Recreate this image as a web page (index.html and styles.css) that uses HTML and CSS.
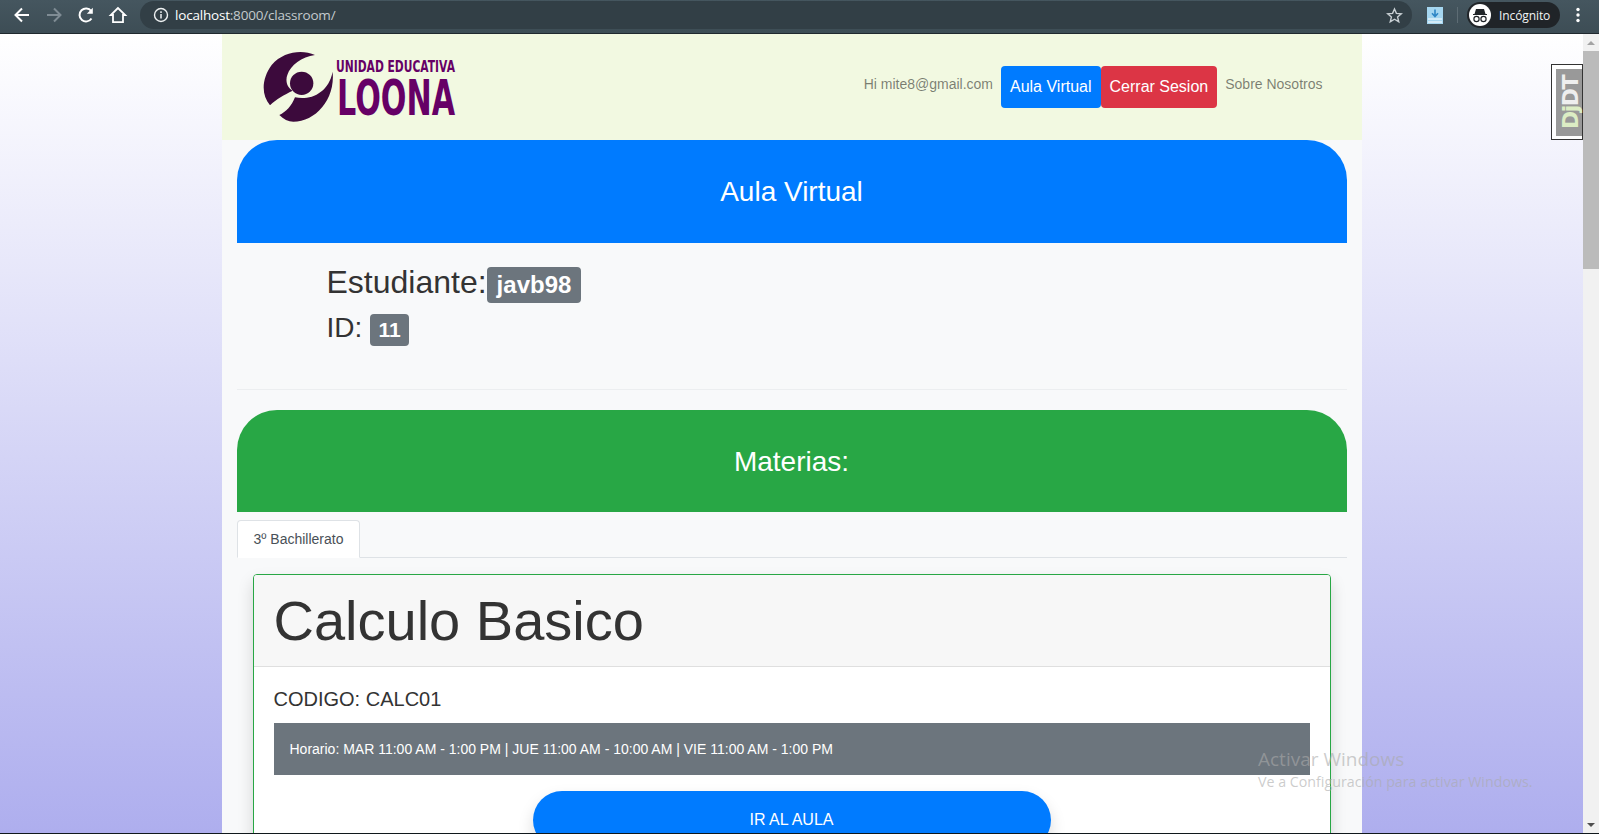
FILE: index.html
```html
<!DOCTYPE html>
<html lang="es">
<head>
<meta charset="utf-8">
<title>Aula Virtual</title>
<link rel="stylesheet" href="styles.css">
</head>
<body>
<header class="toolbar">
  <svg class="tool-icon" viewBox="0 0 20 20"><path d="M17 10H4M10 3.5 3.5 10l6.5 6.5" fill="none" stroke="#fff" stroke-width="2"/></svg>
  <svg class="tool-icon" viewBox="0 0 20 20"><path d="M3 10h13M10 3.5l6.5 6.500L10 16.500" fill="none" stroke="#7f8c94" stroke-width="2"/></svg>
  <svg class="tool-icon" viewBox="0 0 20 20"><path d="M15.500 13.500a6.500 6.500 0 1 1-.300-7.500" fill="none" stroke="#fff" stroke-width="2"/><path d="M16.800 2.800v6h-6z" fill="#fff"/></svg>
  <svg class="tool-icon" viewBox="0 0 20 20"><path d="M10 3 2.800 10H5v7.200h10V10h2.200z" fill="none" stroke="#fff" stroke-width="1.800"/></svg>
  <div class="address">
    <svg class="info-icon" viewBox="0 0 16 16"><circle cx="8" cy="8" r="6.500" fill="none" stroke="#eef1f2" stroke-width="1.400"/><path d="M8 7v4.500M8 4.300v1.600" stroke="#eef1f2" stroke-width="1.500"/></svg>
    <span class="url"><b class="host">localhost</b>:8000/classroom/</span>
    <svg class="star-icon" viewBox="0 0 16 16"><path d="M8 1.800 9.800 6l4.600.400-3.500 3 1.100 4.500L8 11.500 4 13.900l1.100-4.500-3.500-3L6.200 6z" fill="none" stroke="#c9d0d4" stroke-width="1.300"/></svg>
  </div>
  <svg class="save-icon" viewBox="0 0 16 17"><rect width="16" height="17" fill="#a5d6f0"/><path d="M8 2.500v6M5 6.300l3 3.200 3-3.200" fill="none" stroke="#2f86c5" stroke-width="1.600"/><path d="M1 12h14M1 15h14" stroke="#fff" stroke-width="1"/></svg>
  <span class="toolbar-sep"></span>
  <div class="profile">
    <span class="profile-face">
      <svg viewBox="0 0 22 22"><path d="M4 10h14v1H4zM7 5h8l1.500 5h-11z" fill="#202428"/><circle cx="7.500" cy="15" r="2.600" fill="none" stroke="#202428" stroke-width="1.200"/><circle cx="14.500" cy="15" r="2.600" fill="none" stroke="#202428" stroke-width="1.200"/></svg>
    </span>
    <span class="profile-name">Incógnito</span>
  </div>
  <svg class="menu-icon" viewBox="0 0 4 16"><circle cx="2" cy="2.500" r="1.700" fill="#fff"/><circle cx="2" cy="8" r="1.700" fill="#fff"/><circle cx="2" cy="13.500" r="1.700" fill="#fff"/></svg>
</header>

<div class="window">
  <main class="page">
    <div class="container">
      <nav class="navbar">
        <svg class="logo" viewBox="0 0 320 80" role="img" aria-label="Unidad Educativa Loona">
          <g transform="translate(-263 -47) scale(.33333)" fill="#3c0a3c">
            <path d="M945 165C905 148 850 155 815 195 785 235 783 285 810 316 830 296 852 285 878 272 860 262 856 240 862 225 872 195 905 170 945 165Z"/>
            <circle cx="905" cy="250" r="35"/>
            <path d="M998 215C1006 300 945 365 880 365 865 365 850 358 838 345 858 336 875 318 885 292 930 302 985 280 998 215Z"/>
          </g>
          <text class="logo-top" x="73" y="25" textLength="119" lengthAdjust="spacingAndGlyphs">UNIDAD EDUCATIVA</text>
          <text class="logo-main" x="74" y="68" textLength="118" lengthAdjust="spacingAndGlyphs">LOONA</text>
        </svg>
        <div class="nav-items">
          <span class="nav-text nav-user">Hi mite8@gmail.com</span>
          <a class="nav-btn btn-blue">Aula Virtual</a>
          <a class="nav-btn btn-red">Cerrar Sesion</a>
          <span class="nav-text nav-about">Sobre Nosotros</span>
        </div>
      </nav>

      <section class="content">
        <h3 class="banner banner-blue">Aula Virtual</h3>
        <div class="student">
          <h2 class="student-name">Estudiante:<span class="badge">javb98</span></h2>
          <h3 class="student-id">ID: <span class="badge">11</span></h3>
        </div>
        <hr class="divider">
        <h3 class="banner banner-green">Materias:</h3>
        <div class="tabs"><a class="tab">3º Bachillerato</a></div>
        <article class="card">
          <h1 class="card-title">Calculo Basico</h1>
          <div class="card-body">
            <h5 class="code">CODIGO: CALC01</h5>
            <div class="schedule">Horario: MAR 11:00 AM - 1:00 PM | JUE 11:00 AM - 10:00 AM | VIE 11:00 AM - 1:00 PM</div>
            <a class="go-btn">IR AL AULA</a>
          </div>
        </article>
      </section>
    </div>
    <div class="djdt"><span class="djdt-inner"><span class="djdt-j">Dj</span>DT</span></div>
    <div class="watermark">
      <div class="wm-title">Activar Windows</div>
      <div class="wm-sub">Ve a Configuración para activar Windows.</div>
    </div>
  </main>
  <aside class="scrollbar">
    <span class="arrow arrow-up"></span>
    <span class="thumb"></span>
    <span class="arrow arrow-down"></span>
  </aside>
</div>
<div class="bottom-line"></div>
</body>
</html>
```
FILE: styles.css
```css
* { box-sizing: border-box; }
html, body { margin: 0; height: 834px; overflow: hidden; }
body {
  display: flex;
  flex-direction: column;
  font-family: "Liberation Sans", Arial, sans-serif;
  color: #333;
}

/* Browser toolbar */
.toolbar {
  height: 34px;
  flex: none;
  display: flex;
  align-items: center;
  background: linear-gradient(#45565f, #3d4d55);
  border-bottom: 1px solid #20292e;
  padding: 0 0 3px 12px;
}
.tool-icon { width: 20px; height: 20px; margin-right: 12px; flex: none; }
.address {
  width: 1272px;
  height: 28px;
  display: flex;
  align-items: center;
  background: #323f46;
  border-radius: 14px;
  padding: 0 9px 0 13px;
  flex: none;
}
.info-icon { width: 16px; height: 16px; flex: none; }
.url {
  margin-left: 6px;
  font: 13.5px "Open Sans", sans-serif;
  color: #c3cacd;
  flex: 1;
  letter-spacing: -0.2px;
}
.host { font-weight: 400; color: #fff; }
.star-icon { width: 17px; height: 17px; flex: none; }
.save-icon { width: 16px; height: 17px; margin-left: 15px; flex: none; }
.toolbar-sep { width: 1px; height: 16px; background: #5d6c74; margin-left: 14px; flex: none; }
.profile {
  width: 93px;
  height: 26px;
  margin-left: 9px;
  display: flex;
  align-items: center;
  gap: 8px;
  background: #202428;
  border-radius: 13px;
  padding-left: 2px;
  flex: none;
}
.profile-face {
  width: 22px;
  height: 22px;
  border-radius: 50%;
  background: #fff;
  display: flex;
}
.profile-face svg { width: 22px; height: 22px; }
.profile-name { font: 12px "Open Sans", sans-serif; color: #f1f3f4; letter-spacing: -0.1px; }
.menu-icon { width: 4px; height: 16px; margin-left: 16px; flex: none; }

/* Window */
.window { flex: 1; min-height: 0; display: flex; }
.page {
  flex: 1;
  min-width: 0;
  position: relative;
  overflow: hidden;
  background: linear-gradient(#fff, #aeaeee);
}
.container { width: 1140px; margin: 0 auto; background: #f8f9fa; }
.bottom-line { height: 1px; flex: none; background: #10181c; }

/* Navbar */
.navbar {
  height: 106px;
  display: flex;
  align-items: center;
  justify-content: space-between;
  padding: 0 39px 0 41px;
  background: #f2f9e1;
}
.logo { width: 320px; height: 80px; flex: none; }
.logo-top { font: 700 15px "DejaVu Sans", sans-serif; fill: #660066; }
.logo-main { font: 700 50px "DejaVu Sans", sans-serif; fill: #660066; }
.nav-items { display: flex; align-items: center; }
.nav-text { font-size: 14px; color: rgba(0, 0, 0, .5); padding-bottom: 6px; }
.nav-user { margin-right: 8px; }
.nav-about { margin-left: 8px; }
.nav-btn {
  height: 42px;
  padding: 0 9px;
  display: flex;
  align-items: center;
  font-size: 16px;
  color: #fff;
  border-radius: 4px;
}
.btn-blue { background: #007bff; }
.btn-red { background: #dc3545; }

/* Content */
.content { padding: 0 15px; }
.banner {
  margin: 0;
  display: flex;
  align-items: center;
  justify-content: center;
  font-size: 28px;
  font-weight: 400;
  color: #fff;
  border-radius: 40px 40px 0 0;
}
.banner-blue { height: 103px; background: #007bff; }
.banner-green { height: 102px; padding-top: 2px; background: #28a745; }
.student { padding: 20px 0 43px 90px; color: #333; }
.student-name { margin: 0 0 8px; font-size: 32px; font-weight: 400; line-height: 38.4px; }
.student-id { margin: 0; font-size: 28px; font-weight: 400; line-height: 33.6px; }
.badge {
  display: inline-block;
  padding: 5.5px 8.5px;
  font-size: 75%;
  font-weight: 700;
  line-height: 1;
  color: #fff;
  background: #6c757d;
  border-radius: 4px;
  vertical-align: baseline;
}
.student-name .badge { padding: 6px 10px; }
.divider { margin: 0 0 20px; border: 0; border-top: 1px solid #eceef0; }

/* Tabs */
.tabs { margin-top: 8px; height: 38px; border-bottom: 1px solid #dee2e6; }
.tab {
  display: inline-block;
  height: 38px;
  padding: 0 16px;
  line-height: 37px;
  font-size: 14px;
  color: #495057;
  background: #fff;
  border: 1px solid #dee2e6;
  border-bottom-color: #fff;
  border-radius: 4px 4px 0 0;
}

/* Card */
.card {
  margin: 16px 16px 0;
  background: #fff;
  border: 1px solid #28a745;
  border-radius: 4px;
  box-shadow: 0 8px 16px rgba(0, 0, 0, .15);
}
.card-title {
  margin: 0;
  height: 92px;
  padding: 0 20px;
  font-size: 56px;
  font-weight: 400;
  line-height: 91px;
  color: #333;
  background: #f7f7f7;
  border-bottom: 1px solid #dfdfdf;
  border-radius: 3px 3px 0 0;
}
.card-body { padding: 20px 20px 20px; }
.code { margin: 0 0 12px; font-size: 20px; font-weight: 400; line-height: 24px; }
.schedule {
  height: 52px;
  display: flex;
  align-items: center;
  padding: 0 16px;
  font-size: 14px;
  color: #fff;
  background: #6c757d;
}
.go-btn {
  display: flex;
  align-items: center;
  justify-content: center;
  width: 518px;
  height: 58px;
  margin: 16px auto 0;
  font-size: 16px;
  color: #fff;
  background: #007bff;
  border-radius: 30px;
  box-shadow: 0 8px 16px rgba(0, 0, 0, .15);
}

/* Overlays */
.djdt {
  position: absolute;
  top: 30px;
  right: 0;
  width: 32px;
  height: 76px;
  background: #fff;
  border: 1px solid #333;
  padding: 4px 0 3px 4px;
}
.djdt-inner {
  display: block;
  height: 100%;
  padding-right: 4px;
  background: #999;
  color: #eee;
  font: 700 22px/22px "DejaVu Sans", sans-serif;
  letter-spacing: -1.500px;
  text-align: center;
  writing-mode: vertical-rl;
  transform: rotate(180deg);
}
.djdt-j { color: #dcedc4; }
.watermark {
  position: absolute;
  left: 1258px;
  top: 712px;
  font-family: "Open Sans", sans-serif;
  color: rgba(170, 170, 170, .6);
}
.wm-title { font-size: 19px; line-height: 26px; }
.wm-sub { font-size: 14.250px; line-height: 20px; }

/* Scrollbar */
.scrollbar {
  width: 16px;
  flex: none;
  display: flex;
  flex-direction: column;
  align-items: center;
  background: #f1f1f1;
}
.arrow { width: 0; height: 0; border-left: 4px solid transparent; border-right: 4px solid transparent; flex: none; }
.arrow-up { margin-top: 7px; border-bottom: 4px solid #a3a3a3; }
.thumb { width: 100%; height: 218px; margin-top: 6px; background: #bbb; }
.arrow-down { margin-top: auto; margin-bottom: 6px; border-top: 4px solid #505050; }
```
